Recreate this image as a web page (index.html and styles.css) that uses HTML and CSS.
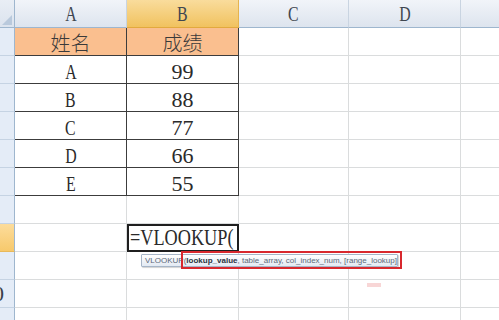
FILE: index.html
```html
<!DOCTYPE html>
<html lang="zh">
<head>
<meta charset="utf-8">
<title>VLOOKUP</title>
<link rel="stylesheet" href="styles.css">
</head>
<body>
<div class="sheet">
  <div class="grid">
    <div class="corner"><span class="tri"></span></div>
    <div class="colh"><span class="lt">A</span></div>
    <div class="colh sel"><span class="lt">B</span></div>
    <div class="colh"><span class="lt">C</span></div>
    <div class="colh"><span class="lt">D</span></div>
    <div class="colh"><span class="lt">E</span></div>

    <div class="rowh"><span class="num">1</span></div>
    <div class="cell fill tb"><span class="zh">姓名</span></div>
    <div class="cell fill tb"><span class="zh">成绩</span></div>
    <div class="cell"></div><div class="cell"></div><div class="cell"></div>

    <div class="rowh"><span class="num">2</span></div>
    <div class="cell tb"><span class="lt">A</span></div>
    <div class="cell tb">99</div>
    <div class="cell"></div><div class="cell"></div><div class="cell"></div>

    <div class="rowh"><span class="num">3</span></div>
    <div class="cell tb"><span class="lt">B</span></div>
    <div class="cell tb">88</div>
    <div class="cell"></div><div class="cell"></div><div class="cell"></div>

    <div class="rowh"><span class="num">4</span></div>
    <div class="cell tb"><span class="lt">C</span></div>
    <div class="cell tb">77</div>
    <div class="cell"></div><div class="cell"></div><div class="cell"></div>

    <div class="rowh"><span class="num">5</span></div>
    <div class="cell tb"><span class="lt">D</span></div>
    <div class="cell tb">66</div>
    <div class="cell"></div><div class="cell"></div><div class="cell"></div>

    <div class="rowh"><span class="num">6</span></div>
    <div class="cell tb"><span class="lt">E</span></div>
    <div class="cell tb">55</div>
    <div class="cell"></div><div class="cell"></div><div class="cell"></div>

    <div class="rowh"><span class="num">7</span></div>
    <div class="cell"></div><div class="cell"></div>
    <div class="cell"></div><div class="cell"></div><div class="cell"></div>

    <div class="rowh sel"><span class="num">8</span></div>
    <div class="cell"></div>
    <div class="cell active"><span class="formula">=VLOOKUP(</span><span class="caret"></span></div>
    <div class="cell"></div><div class="cell"></div><div class="cell"></div>

    <div class="rowh"><span class="num">9</span></div>
    <div class="cell"></div><div class="cell"></div>
    <div class="cell"></div><div class="cell"></div><div class="cell"></div>

    <div class="rowh"><span class="num">10</span></div>
    <div class="cell"></div><div class="cell"></div>
    <div class="cell"></div><div class="cell"></div><div class="cell"></div>

    <div class="rowh"><span class="num">11</span></div>
    <div class="cell"></div><div class="cell"></div>
    <div class="cell"></div><div class="cell"></div><div class="cell"></div>
  </div>

  <div class="tooltip">VLOOKUP(<b>lookup_value</b>, table_array, col_index_num, [range_lookup])</div>
  <div class="redbox"></div>
  <div class="mark"></div>
</div>
</body>
</html>
```
FILE: styles.css
```css
html, body {
  margin: 0;
  padding: 0;
  background: #ffffff;
}

.sheet {
  position: relative;
  width: 499px;
  height: 320px;
  overflow: hidden;
}

.grid {
  display: grid;
  grid-template-columns: 15px 112px 112px 110px 112px 112px;
  grid-auto-rows: 28px;
  font-family: "Liberation Serif", "Noto Sans CJK SC", serif;
  color: #222;
}

.grid > div {
  box-sizing: border-box;
}

.corner {
  position: relative;
  background: linear-gradient(#e9eef5, #dbe3ee);
  border-right: 1px solid #9eb6ce;
  border-bottom: 1px solid #9eb6ce;
}

.tri {
  position: absolute;
  right: 2px;
  bottom: 2px;
  width: 10px;
  height: 10px;
  background: #b9c9dc;
  clip-path: polygon(100% 0, 100% 100%, 0 100%);
}

.colh {
  display: flex;
  align-items: center;
  justify-content: center;
  background: linear-gradient(#f1f4f9, #dde4ee);
  border-right: 1px solid #c9d4e1;
  border-bottom: 1px solid #9eb6ce;
  font-size: 22px;
  line-height: 1;
  color: #3f4650;
}

.colh.sel {
  background: linear-gradient(#f9dc9c, #f1c25f);
  border-right-color: #e5b44f;
  border-bottom-color: #e2a93e;
}

.rowh {
  display: flex;
  align-items: center;
  overflow: hidden;
  background: #e4ecf7;
  border-right: 1px solid #9eb6ce;
  border-bottom: 1px solid #c5d3e3;
  font-size: 22px;
  line-height: 1;
  color: #3a3f47;
}

.rowh.sel {
  background: linear-gradient(#fcdc9b, #f7c96c);
  border-bottom-color: #e8b95a;
}

.num {
  flex: 0 0 30px;
  margin-left: -22px;
  text-align: center;
}

.cell {
  display: flex;
  align-items: flex-end;
  justify-content: center;
  border-right: 1px solid #dadcdd;
  border-bottom: 1px solid #dadcdd;
  font-size: 22px;
  line-height: 1;
  white-space: nowrap;
  color: #2a2a2a;
}

.cell.fill {
  background: #fabf8f;
}

.zh {
  font-size: 20px;
  font-weight: 300;
  color: #3a3a3a;
  margin-bottom: 1px;
}

.cell.tb {
  border-right-color: #3c3c3c;
  border-bottom-color: #3c3c3c;
}

.lt {
  display: inline-block;
  transform: scaleX(0.72);
}

.cell.active {
  justify-content: flex-start;
  border: 2px solid #1f1f1f;
  padding-left: 1px;
  padding-bottom: 1px;
}

.formula {
  display: inline-block;
  font-size: 24px;
  transform: scaleX(0.76);
  transform-origin: left bottom;
}

.caret {
  position: absolute;
}

.tooltip {
  position: absolute;
  left: 141px;
  top: 254px;
  width: 257px;
  height: 13px;
  box-sizing: border-box;
  padding: 0 3px;
  border: 1px solid #a6b5c7;
  border-radius: 1px;
  background: linear-gradient(#ffffff, #e3eaf3);
  box-shadow: 1px 1px 1px rgba(0, 0, 0, 0.18);
  font-family: "Liberation Sans", Arial, sans-serif;
  font-size: 8px;
  line-height: 11px;
  color: #5c6878;
  white-space: nowrap;
  overflow: hidden;
}

.tooltip b {
  color: #2b3340;
}

.redbox {
  position: absolute;
  left: 181px;
  top: 251px;
  width: 221px;
  height: 18px;
  box-sizing: border-box;
  border: 2px solid #d8282e;
}

.mark {
  position: absolute;
  left: 367px;
  top: 283px;
  width: 14px;
  height: 4px;
  background: #f8d6d6;
}
```
